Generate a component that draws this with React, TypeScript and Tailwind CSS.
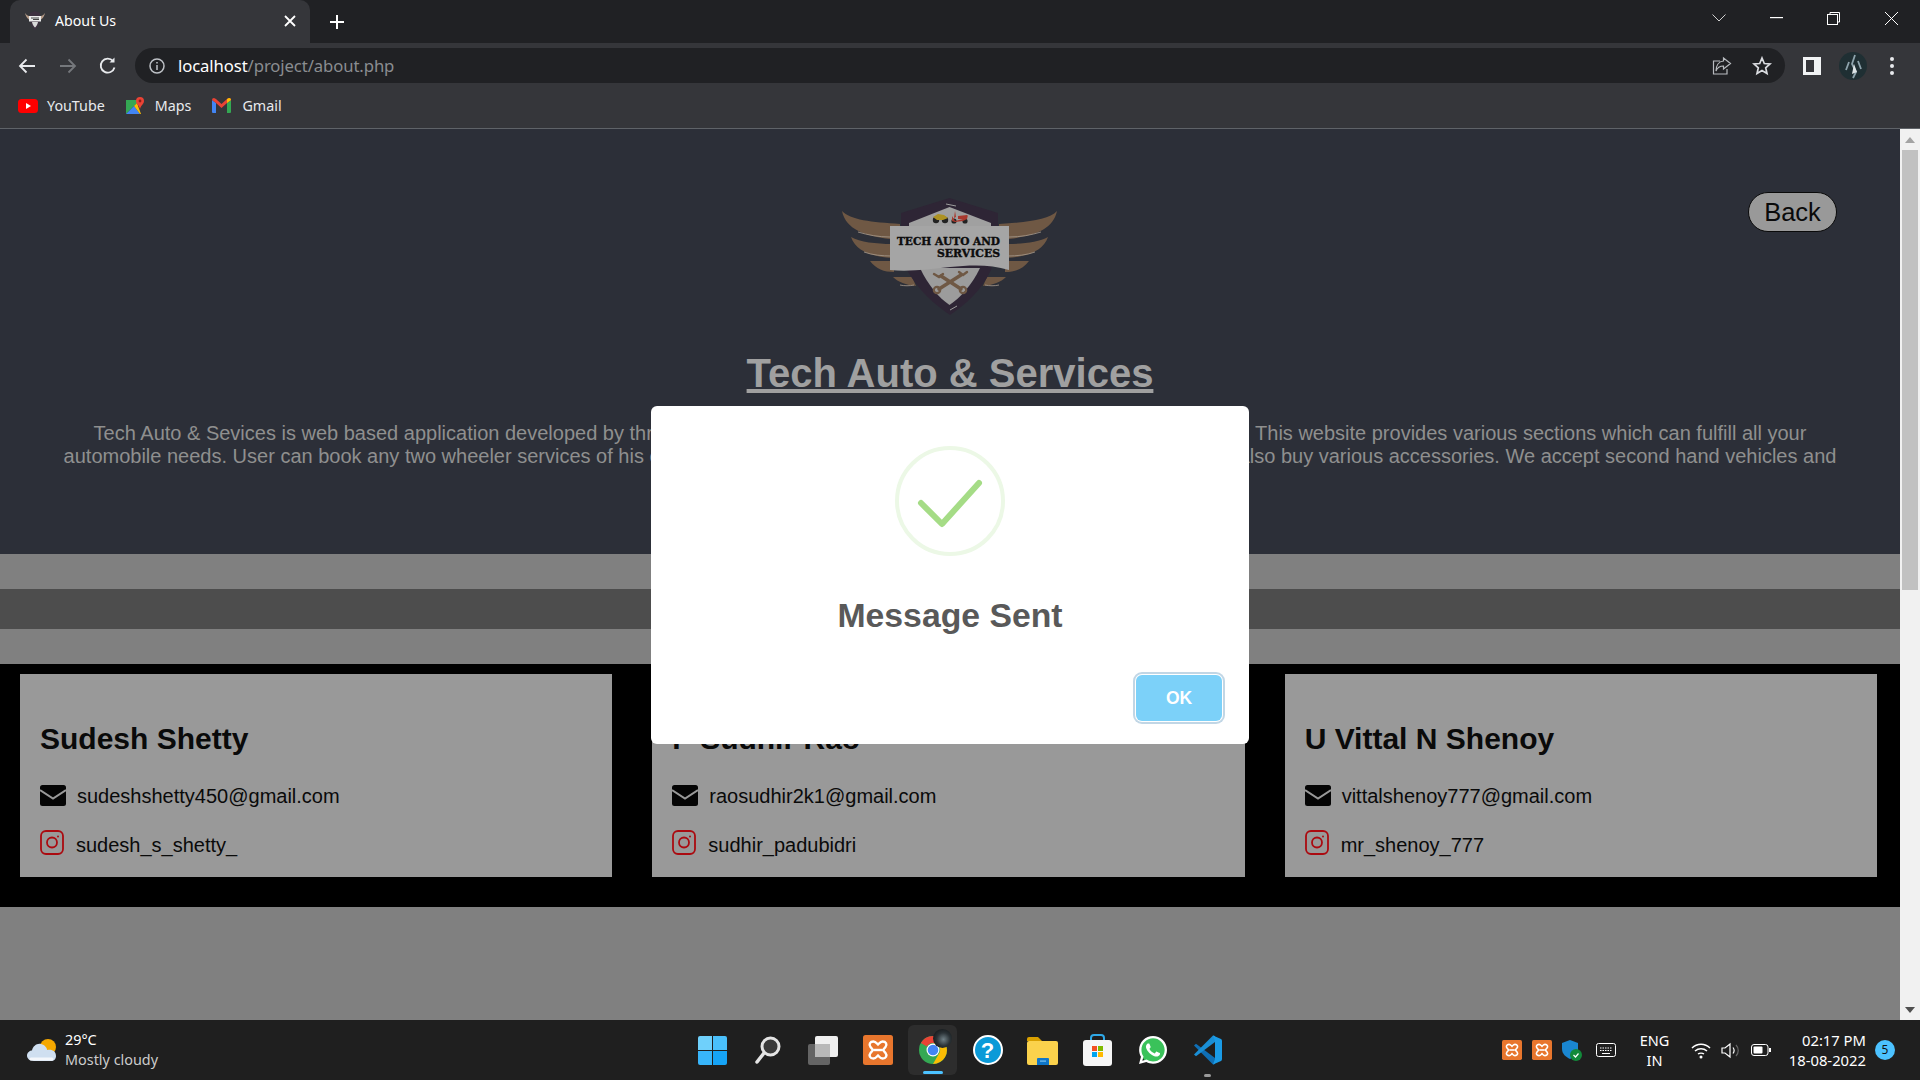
import React from "react";
import { FaWhatsapp } from "react-icons/fa";

const ui = "font-['Noto_Sans','Open_Sans',sans-serif]";
const arial = "font-['Liberation_Sans',Arial,sans-serif]";

function Logo({ className = "" }: { className?: string }) {
  const wings = (
    <g>
      <g fill="#6f5844">
        <path d="M42 31 C50 40 72 42 100 44 L100 59 L90 59 C66 56 46 50 42 31Z" />
        <path d="M51 57 C60 62 76 64 92 64 L92 78 C74 77 56 72 51 57Z" />
        <path d="M70 81 L94 81 L94 92 C84 92 76 89 70 81Z" />
        <path d="M93 97 L112 97 L116 106 C106 105 98 102 93 97Z" />
      </g>
      <g fill="none" stroke="#a89c8e" strokeWidth={0.8}>
        <path d="M58 52 C68 55 78 57 90 57" />
        <path d="M64 72 C72 75 82 76 92 76" />
        <path d="M100 105 C104 106 110 106 114 105" />
      </g>
    </g>
  );
  return (
    <svg viewBox="40 17 220 120" className={className}>
      {wings}
      <g transform="translate(299 0) scale(-1 1)">{wings}</g>
      <path d="M149.500 18 L198 33 L198 50 L191 90 C182 110 165 125 150 135 C135 125 118 110 107 90 L101 50 L101 33 Z" fill="#2e2535" />
      <path d="M149.500 27 L191 43 L191 48 L109 48 L109 43 Z" fill="#a0a0a0" />
      <path d="M120 88 L180 88 C172 105 160 118 149.500 125 C139 118 128 105 120 88 Z" fill="#9c9c9c" />
      <path d="M146 24 L156 26 M150 130 L157 126" stroke="#9c9c9c" strokeWidth={1} />
      <path d="M90 46 L209 46 L209 90 C190 84 170 85 150 87 C130 89 110 92 90 90 Z" fill="#a5a5a5" />
      <text x="200" y="65" textAnchor="end" textLength={103} lengthAdjust="spacingAndGlyphs" fontFamily="'DejaVu Serif',serif" fontWeight={900} fontSize={11} fill="#0d0d0d" stroke="#0d0d0d" strokeWidth={0.4}>TECH AUTO AND</text>
      <text x="200" y="77" textAnchor="end" textLength={63} lengthAdjust="spacingAndGlyphs" fontFamily="'DejaVu Serif',serif" fontWeight={900} fontSize={11} fill="#0d0d0d" stroke="#0d0d0d" strokeWidth={0.4}>SERVICES</text>
      <g>
        <circle cx="136" cy="40" r="3.200" fill="#222" />
        <circle cx="145" cy="40" r="3.200" fill="#222" />
        <path d="M133 37 L138 34 L144 35 L148 38 L143 40 L137 40 Z" fill="#ad9222" />
        <circle cx="154" cy="41" r="2.600" fill="#222" />
        <circle cx="165" cy="41" r="2.600" fill="#222" />
        <path d="M152 36 L155 41 L163 39 L168 35 L167 39 L163 41 L155 42 L152 41 Z M155 31 L156 37 L154 38 Z" fill="#a8382e" />
        <path d="M158 36 L167 35 L167 39 L158 39 Z" fill="#a8382e" />
      </g>
      <g stroke="#6f5844" strokeLinecap="round" fill="none">
        <path d="M139 109 L161 95" strokeWidth={3.500} />
        <path d="M141 96 L161 109" strokeWidth={3.500} />
        <circle cx="137" cy="110" r="3.200" strokeWidth={2.200} />
        <circle cx="163" cy="110" r="3.200" strokeWidth={2.200} />
        <path d="M159 92 L163 95 L167 92" strokeWidth={2.400} />
        <path d="M134 94 L139 97 L143 94" strokeWidth={2.400} />
      </g>
    </svg>
  );
}

function Favicon() {
  return (
    <svg width="20" height="19" viewBox="0 0 20 19">
      <path d="M0 2 C2 5 4 5 6 5 V9 C3 9 1 6 0 2Z M20 2 C18 5 16 5 14 5 V9 C17 9 19 6 20 2Z" fill="#b59c88" />
      <path d="M10 0 L15 2 V9 C15 13 12 17 10 19 C8 17 5 13 5 9 V2 Z" fill="#3e3140" />
      <path d="M10 11 H13 C12.500 14 11 15.500 10 16.500 C9 15.500 7.500 14 7 11 Z" fill="#d8d8d8" />
      <rect x="4" y="5" width="12" height="5.500" fill="#ececec" />
      <rect x="6" y="6.500" width="8" height="1" fill="#444" />
      <rect x="8" y="8" width="6" height="1" fill="#444" />
    </svg>
  );
}

function Xampp({ size }: { size: number }) {
  return (
    <svg width={size} height={size} viewBox="0 0 30 30">
      <rect x="0" y="0" width="30" height="30" rx="2.500" fill="#e8762d" />
      <path d="M10.500 6.500 C7 6.500 5.500 9.500 7.500 12 L10 15 L7.500 18 C5.500 20.500 7 23.500 10.500 23.500 C12.500 23.500 13.500 22 15 20.500 C16.500 22 17.500 23.500 19.500 23.500 C23 23.500 24.500 20.500 22.500 18 L20 15 L22.500 12 C24.500 9.500 23 6.500 19.500 6.500 C17.500 6.500 16.500 8 15 9.500 C13.500 8 12.500 6.500 10.500 6.500 Z" fill="none" stroke="#fff" strokeWidth={2.400} />
      <path d="M11 15 L19 15" stroke="#fff" strokeWidth={2.400} />
    </svg>
  );
}

function Mail() {
  return (
    <svg width="26" height="21" viewBox="0 0 26 21" className="shrink-0">
      <rect width="26" height="21" rx="2.500" fill="#050505" />
      <path d="M0 5 L13 13.500 L26 5" stroke="#999999" strokeWidth={2} fill="none" />
    </svg>
  );
}

function Insta() {
  return (
    <svg width="24" height="25" viewBox="0 0 24 25" fill="none" stroke="#ab0a10" strokeWidth={1.800} className="shrink-0">
      <rect x="1" y="1" width="22" height="23" rx="5" />
      <circle cx="12" cy="12.500" r="5" />
      <circle cx="18" cy="6.500" r="1" fill="#ab0a10" stroke="none" />
    </svg>
  );
}

function TabBar() {
  return (
    <div className="h-[43px] bg-[#202124] flex items-end pl-[10px]">
      <div className={`relative w-[300px] h-[43px] bg-[#35363a] rounded-t-[10px] flex items-center pl-[15px] pr-[14px] pb-[2px] ${ui}`}>
        <Favicon />
        <span className="ml-[10px] text-[14.200px] text-white flex-1">About Us</span>
        <svg width="12" height="12" viewBox="0 0 12 12" stroke="#fff" strokeWidth={1.800}><path d="M1 1 L11 11 M11 1 L1 11" /></svg>
      </div>
      <div className="w-[55px] h-[43px] flex items-center justify-center pr-[1px] -mt-[1px]">
        <svg width="16" height="16" viewBox="0 0 16 16" stroke="#fff" strokeWidth={2}><path d="M8 1 V15 M1 8 H15" /></svg>
      </div>
      <div className="flex-1" />
      <div className="flex items-center h-[36px] mb-[7px] pr-[22px] self-start mt-0">
        <svg width="14" height="8" viewBox="0 0 14 8" fill="none" stroke="#d0d0d0" strokeWidth={1} className="mr-[44px]"><path d="M0.500 0.500 L7 7 L13.500 0.500" /></svg>
        <svg width="13" height="2" viewBox="0 0 13 2" className="mr-[44px]"><rect width="13" height="1.200" fill="#fff" /></svg>
        <svg width="13" height="13" viewBox="0 0 13 13" fill="none" stroke="#fff" strokeWidth={1} className="mr-[45px]"><rect x="0.500" y="2.500" width="10" height="10" /><path d="M3 2.500 V0.500 H12.500 V10 H10.500" /></svg>
        <svg width="13" height="13" viewBox="0 0 13 13" stroke="#fff" strokeWidth={1}><path d="M0 0 L13 13 M13 0 L0 13" /></svg>
      </div>
    </div>
  );
}

function Toolbar() {
  return (
    <div className="h-[42px] bg-[#35363a] flex items-center pt-[3px] pl-[17px]">
      <svg width="20" height="20" viewBox="0 0 20 20" fill="none" stroke="#e8eaed" strokeWidth={1.800}><path d="M18 10 H3 M9.500 3.500 L3 10 L9.500 16.500" /></svg>
      <svg width="20" height="20" viewBox="0 0 20 20" fill="none" stroke="#75787c" strokeWidth={1.800} className="ml-[21px]"><path d="M2 10 H17 M10.500 3.500 L17 10 L10.500 16.500" /></svg>
      <svg width="20" height="20" viewBox="0 0 20 20" fill="none" stroke="#e8eaed" strokeWidth={1.800} className="ml-[20px]"><path d="M16.500 11.500 A7 7 0 1 1 15 5" /><path d="M16.500 1.500 V6.500 H11.500 Z" fill="#e8eaed" stroke="none" /></svg>
      <div className={`ml-[17px] w-[1650px] h-[35px] rounded-full bg-[#202124] flex items-center pl-[14px] pr-[13px] ${ui}`}>
        <svg width="16" height="16" viewBox="0 0 16 16" fill="none" stroke="#bdc1c6" strokeWidth={1.500}><circle cx="8" cy="8" r="7" /><path d="M8 7 V12 M8 4 V5.500" /></svg>
        <span className="ml-[13px] text-[16.700px] text-white tracking-[-0.1px]">localhost<span className="text-[#8a8d91]">/project/about.php</span></span>
        <div className="flex-1" />
        <svg width="20" height="20" viewBox="0 0 20 20" fill="none" stroke="#b8bbbf" strokeWidth={1.200}><path d="M8 5 H1.500 V18 H15 V13" /><path d="M11.500 2 L18.500 7.500 L11.500 13 V10 C8 10 5.500 11 4 15 C4 10 6.500 5.500 11.500 5 Z" /></svg>
        <svg width="20" height="20" viewBox="0 0 20 20" fill="none" stroke="#dadce0" strokeWidth={1.700} className="ml-[20px]"><path d="M10 2 L12.300 7.500 L18 8 L13.700 11.800 L15 17.500 L10 14.500 L5 17.500 L6.300 11.800 L2 8 L7.700 7.500 Z" /></svg>
      </div>
      <svg width="18" height="18" viewBox="0 0 18 18" className="ml-[18px]"><rect width="18" height="18" fill="#f1f3f4" /><rect x="3" y="3" width="8" height="12" fill="#35363a" /></svg>
      <svg width="28" height="28" viewBox="0 0 28 28" className="ml-[18px]">
        <circle cx="14" cy="14" r="14" fill="#1f2f33" />
        <path d="M16 3 L13 12 L17 20 L14 26 M10 10 L7 18 M19 9 L22 17" stroke="#8ea4ad" strokeWidth={1.800} fill="none" />
        <path d="M15 12 L18 20 L13 22 Z" fill="#dfe6e8" />
      </svg>
      <div className="ml-[23px] flex flex-col gap-[3px]">
        <div className="w-[4px] h-[4px] rounded-full bg-[#e8eaed]" />
        <div className="w-[4px] h-[4px] rounded-full bg-[#e8eaed]" />
        <div className="w-[4px] h-[4px] rounded-full bg-[#e8eaed]" />
      </div>
    </div>
  );
}

function Bookmarks() {
  return (
    <div className={`h-[44px] bg-[#35363a] border-b border-[#5f6368] flex items-center pl-[18px] pb-[2px] text-[14.300px] text-[#e8eaed] ${ui}`}>
      <svg width="20" height="14" viewBox="0 0 20 14"><rect width="20" height="14" rx="3.500" fill="#ff0000" /><path d="M8 4 L13 7 L8 10 Z" fill="#fff" /></svg>
      <span className="ml-[9px]">YouTube</span>
      <svg width="18" height="18" viewBox="0 0 18 18" className="ml-[21px]">
        <path d="M0 3 L11 3 L11 6 L0 17 Z" fill="#34a853" />
        <path d="M0 17 L8 9 L14 17 Z" fill="#4285f4" />
        <path d="M8 9 L11 6 L15 17 L14 17 Z" fill="#fbbc04" />
        <path d="M14 0 A4 4 0 0 1 18 4 C18 7 15 8 14 12 C13 8 10 7 10 4 A4 4 0 0 1 14 0Z" fill="#ea4335" />
        <circle cx="14" cy="4" r="1.400" fill="#8c1d18" />
      </svg>
      <span className="ml-[11px]">Maps</span>
      <svg width="19" height="15" viewBox="0 0 19 15" className="ml-[21px]">
        <path d="M0 2 L4 5 V15 H1 Q0 15 0 14 Z" fill="#4285f4" />
        <path d="M15 5 L19 2 V14 Q19 15 18 15 H15 Z" fill="#34a853" />
        <path d="M0 2 Q0 0 2 0 L4 1 L9.500 6 L15 1 L17 0 Q19 0 19 2 L15 5 L9.500 10 L4 5 Z" fill="#ea4335" />
        <path d="M15 1 L17 0 Q19 0 19 2 L15 5 Z" fill="#fbbc04" />
      </svg>
      <span className="ml-[11px]">Gmail</span>
    </div>
  );
}

function Card({ name, email, insta }: { name: string; email: string; insta: string }) {
  return (
    <div className={`h-[203px] bg-[#999999] pt-[46px] pl-[20px] text-[#0a0a0a] ${arial}`}>
      <h2 className="text-[30px] leading-[37px] font-bold">{name}</h2>
      <div className="mt-[28px] flex text-[20px] leading-[23px]">
        <Mail />
        <span className="ml-[11px]">{email}</span>
      </div>
      <div className="mt-[22px] flex text-[20px] leading-[23px]">
        <Insta />
        <span className="ml-[12px] mt-[4px]">{insta}</span>
      </div>
    </div>
  );
}

function Modal() {
  return (
    <div className={`absolute left-[651px] top-[277px] w-[598px] h-[338px] bg-white rounded-[6px] pt-[40px] flex flex-col items-center ${arial}`}>
      <svg width="110" height="110" viewBox="0 0 110 110" fill="none">
        <circle cx="55" cy="55" r="53" stroke="#ecf8e6" strokeWidth={4} />
        <path d="M26 57 L47 78 L84 37" stroke="#a5dc86" strokeWidth={6} strokeLinecap="round" strokeLinejoin="round" />
      </svg>
      <div className="mt-[39px] text-[33.750px] leading-[40px] font-bold text-[#595959]">Message Sent</div>
      <div className="self-end mt-[40px] mr-[27px] w-[86px] h-[46px] rounded-[6px] bg-[#7cd1f9] text-white text-[17.500px] font-bold flex items-center justify-center shadow-[0_0_0_1px_#fff,0_0_0_3px_rgba(43,114,165,0.29)]">OK</div>
    </div>
  );
}

function Chrome() {
  return (
    <div className="relative w-[49px] h-[50px] rounded-[6px] bg-[#2d2d2d] flex items-center justify-center">
      <svg width="28" height="28" viewBox="0 0 28 28">
        <circle cx="14" cy="14" r="14" fill="#34a853" />
        <path d="M14 0 A14 14 0 0 1 26.100 7 L14 7 A7 7 0 0 0 7.900 10.500 L1.900 7 A14 14 0 0 1 14 0Z" fill="#ea4335" />
        <path d="M26.100 7 A14 14 0 0 1 14 28 L20 17.500 A7 7 0 0 0 20 10 L14 7Z" fill="#fbbc04" />
        <circle cx="14" cy="14" r="6.500" fill="#fff" />
        <circle cx="14" cy="14" r="5.300" fill="#4285f4" />
      </svg>
      <div className="absolute left-[25px] top-[4px] w-[19px] h-[19px] rounded-full bg-[radial-gradient(circle_at_55%_55%,#6f7f85_0%,#2a3236_45%,#14181a_80%)]" />
      <div className="absolute bottom-[1px] left-[15px] w-[20px] h-[3px] rounded-full bg-[#4cc2ff]" />
    </div>
  );
}

function VsCode() {
  return (
    <svg width="30" height="30" viewBox="0 0 30 30">
      <path d="M1 10.500 L3 8.800 L22 23 L22 29 L20 29.500 Z" fill="#0f6fb5" />
      <path d="M1 19.500 L3 21.200 L22 7 L22 1 L20 0.500 Z" fill="#1a8fd6" />
      <path d="M20 0.500 L28 4 Q29 4.500 29 6 V24 Q29 25.500 28 26 L20 29.500 L22 24 V6 Z" fill="#1a9be6" />
    </svg>
  );
}

function TaskIcons() {
  const cell = "w-[55px] h-[50px] flex items-center justify-center relative";
  return (
    <div className="flex">
      <div className={cell}>
        <div className="grid grid-cols-2 gap-[1px] w-[29px] h-[29px]">
          <div className="bg-[#6fd0fb] rounded-tl-[2px]" />
          <div className="bg-[#4ac0fb] rounded-tr-[2px]" />
          <div className="bg-[#38b5fa] rounded-bl-[2px]" />
          <div className="bg-[#16a4f7] rounded-br-[2px]" />
        </div>
      </div>
      <div className={cell}>
        <svg width="26" height="28" viewBox="0 0 26 28" fill="none"><circle cx="15.500" cy="10.500" r="8.500" stroke="#e4e4e4" strokeWidth={3} fill="#3a3a3a" /><path d="M9 17 L2 26" stroke="#e4e4e4" strokeWidth={3.500} strokeLinecap="round" /></svg>
      </div>
      <div className={cell}>
        <svg width="30" height="29" viewBox="0 0 30 29"><rect x="7" y="0" width="23" height="21" rx="2" fill="#f0f0f0" /><rect x="0" y="8" width="22" height="21" rx="2" fill="#6b6b6b" fillOpacity={0.9} /><rect x="7" y="8" width="15" height="13" fill="#b9b9b9" /></svg>
      </div>
      <div className={cell}><Xampp size={30} /></div>
      <div className={cell}><Chrome /></div>
      <div className={cell}>
        <div className={`w-[30px] h-[30px] rounded-full bg-[#0b9ad8] border-[2px] border-white text-white text-[22px] font-bold flex items-center justify-center ${arial}`}>?</div>
      </div>
      <div className={cell}>
        <svg width="31" height="29" viewBox="0 0 31 29"><path d="M0 3 Q0 1 2 1 H11 L15 5 H0 Z" fill="#d9a000" /><rect x="0" y="5" width="31" height="24" rx="2" fill="#fbd24c" /><path d="M10 29 V23 Q10 22 11 22 H21 Q22 22 22 23 V29 Z" fill="#0f76c8" /><rect x="13" y="24.500" width="6" height="1.200" fill="#7cc4f0" /></svg>
      </div>
      <div className={cell}>
        <svg width="29" height="32" viewBox="0 0 29 32">
          <path d="M8 8 V4 Q8 1 11 1 H18 Q21 1 21 4 V8" fill="none" stroke="#2fa9e8" strokeWidth={2} />
          <rect x="0" y="6" width="29" height="26" rx="3" fill="#f6f6f6" />
          <rect x="9" y="12" width="5" height="5" fill="#f25022" /><rect x="15" y="12" width="5" height="5" fill="#7fba00" /><rect x="9" y="18" width="5" height="5" fill="#00a4ef" /><rect x="15" y="18" width="5" height="5" fill="#ffb900" />
        </svg>
      </div>
      <div className={cell}>
        <div className="relative w-[30px] h-[30px] flex items-center justify-center">
          <div className="absolute inset-[2px] rounded-full bg-[#3ac25a]" />
          <FaWhatsapp size={32} color="#ffffff" className="relative" />
        </div>
      </div>
      <div className={cell}>
        <VsCode />
        <div className="absolute bottom-[-2px] left-[24px] w-[7px] h-[3px] rounded-full bg-[#9a9a9a]" />
      </div>
    </div>
  );
}

function Tray() {
  return (
    <div className={`absolute right-[25px] top-0 h-[60px] flex items-center text-white ${ui}`}>
      <Xampp size={20} />
      <div className="ml-[10px]"><Xampp size={20} /></div>
      <svg width="20" height="21" viewBox="0 0 20 21" className="ml-[10px]">
        <path d="M8 0 L16 3 V9 C16 14 12 17 8 19 C4 17 0 14 0 9 V3 Z" fill="#1a86d0" />
        <circle cx="14" cy="15" r="6" fill="#128a3a" />
        <path d="M11.500 15 L13.500 17 L16.500 13.500" stroke="#fff" strokeWidth={1.200} fill="none" />
      </svg>
      <svg width="20" height="14" viewBox="0 0 20 14" fill="none" stroke="#fff" strokeWidth={1} className="ml-[14px]"><rect x="0.500" y="0.500" width="19" height="13" rx="2" /><path d="M4 5 H16 M4 7.500 H16" strokeDasharray="1.500 1" /><path d="M6 10.500 H14" /></svg>
      <div className="ml-[24px] w-[29px] flex flex-col items-center text-[14.500px] leading-[20px] whitespace-nowrap"><span>ENG</span><span>IN</span></div>
      <svg width="20" height="17" viewBox="0 0 20 17" fill="none" stroke="#fff" strokeWidth={1.500} className="ml-[22px]"><path d="M1 6 C6 1 14 1 19 6 M4 9 C7.500 6 12.500 6 16 9 M7 12 C8.500 11 11.500 11 13 12" /><circle cx="10" cy="15" r="1.500" fill="#fff" stroke="none" /></svg>
      <svg width="20" height="17" viewBox="0 0 20 17" fill="none" stroke="#fff" strokeWidth={1.200} className="ml-[10px]"><path d="M1 6 H4 L9 2 V15 L4 11 H1 Z" /><path d="M12 5.500 C13.500 7.500 13.500 9.500 12 11.500" /><path d="M15 3 C18 6 18 11 15 14" stroke="#666" /></svg>
      <svg width="20" height="12" viewBox="0 0 20 12" fill="none" className="ml-[10px]"><rect x="0.500" y="0.500" width="16.500" height="11" rx="2.500" stroke="#fff" /><rect x="2.500" y="2.500" width="9" height="7" rx="1" fill="#fff" /><rect x="18" y="4" width="2" height="4" fill="#fff" /></svg>
      <div className="ml-[9px] w-[86px] flex flex-col items-end text-[14.800px] leading-[20px] whitespace-nowrap"><span>02:17 PM</span><span>18-08-2022</span></div>
      <div className="ml-[9px] w-[20px] h-[20px] rounded-full bg-[#4cc2ff] text-[#111] text-[12px] flex items-center justify-center">5</div>
    </div>
  );
}

function Taskbar() {
  return (
    <div className="relative h-[60px] bg-[#1f1f1f] flex items-center justify-center">
      <div className={`absolute left-[27px] top-0 h-[60px] flex items-center ${ui}`}>
        <svg width="30" height="24" viewBox="0 0 30 24">
          <circle cx="21" cy="9" r="8" fill="#f5a800" />
          <path d="M7 23 C2 23 0 20 0 17.500 C0 14.500 3 12.500 5 12.500 C6 8 10 5 14 6 C18 7 20 10 20 12 C25 11 29 13 29 18 C29 21 27 23 24 23 Z" fill="#cfdff0" />
          <path d="M4 21 H25" stroke="#f4f7fb" strokeWidth={3} strokeLinecap="round" />
        </svg>
        <div className="ml-[8px] flex flex-col text-[14.400px] leading-[20px] whitespace-nowrap">
          <span className="text-white">29°C</span>
          <span className="text-[#cccccc]">Mostly cloudy</span>
        </div>
      </div>
      <TaskIcons />
      <Tray />
    </div>
  );
}

function Scrollbar() {
  return (
    <div className="w-[20px] bg-[#f1f1f1] flex flex-col items-center">
      <div className="h-[21px] flex items-center justify-center">
        <div className="w-0 h-0 border-x-[5px] border-x-transparent border-b-[6px] border-b-[#a3a3a3]" />
      </div>
      <div className="w-[16px] h-[440px] bg-[#c1c1c1]" />
      <div className="flex-1" />
      <div className="h-[21px] flex items-center justify-center">
        <div className="w-0 h-0 border-x-[5px] border-x-transparent border-t-[6px] border-t-[#505050]" />
      </div>
    </div>
  );
}

export default function App() {
  return (
    <div className="w-[1920px] h-[1080px] flex flex-col overflow-hidden">
      <TabBar />
      <Toolbar />
      <Bookmarks />
      <div className="relative flex-1 flex min-h-0">
        <main className={`flex-1 flex flex-col bg-[#808080] ${arial}`}>
          <section className="h-[425px] bg-[#2c2f38]">
            <div className="grid grid-cols-[1fr_auto_1fr] pt-[63px]">
              <div />
              <Logo className="w-[220px] h-[120px] mx-auto mt-[5px]" />
              <div className="flex justify-end pr-[63px]">
                <div className="w-[89px] h-[40px] rounded-[20px] border border-[#0a0a0a] bg-[#999999] text-[25.500px] text-[#0a0a0a] flex items-center justify-center">Back</div>
              </div>
            </div>
            <h1 className="mt-[33px] text-center text-[40px] leading-[46px] font-bold underline text-[#a0a0a0]">Tech Auto &amp; Services</h1>
            <div className="mt-[26px] text-center text-[20px] leading-[23px] text-[#8f8f8f] whitespace-nowrap">
              <p>Tech Auto &amp; Sevices is web based application developed by three students of Computer Science and Engineering for their project.&nbsp; This website provides various sections which can fulfill all your</p>
              <p>automobile needs. User can book any two wheeler services of his choice through this website at any given time he wishes. User can also buy various accessories. We accept second hand vehicles and</p>
            </div>
          </section>
          <div className="h-[35px]" />
          <div className="h-[40px] bg-[#4d4d4d]" />
          <div className="h-[35px]" />
          <section className="h-[243px] bg-black pt-[10px] pl-[20px] pr-[23px] grid grid-cols-3 gap-x-[40px] items-start">
            <Card name="Sudesh Shetty" email="sudeshshetty450@gmail.com" insta="sudesh_s_shetty_" />
            <Card name="P Sudhir Rao" email="raosudhir2k1@gmail.com" insta="sudhir_padubidri" />
            <Card name="U Vittal N Shenoy" email="vittalshenoy777@gmail.com" insta="mr_shenoy_777" />
          </section>
        </main>
        <Scrollbar />
        <Modal />
      </div>
      <Taskbar />
    </div>
  );
}
